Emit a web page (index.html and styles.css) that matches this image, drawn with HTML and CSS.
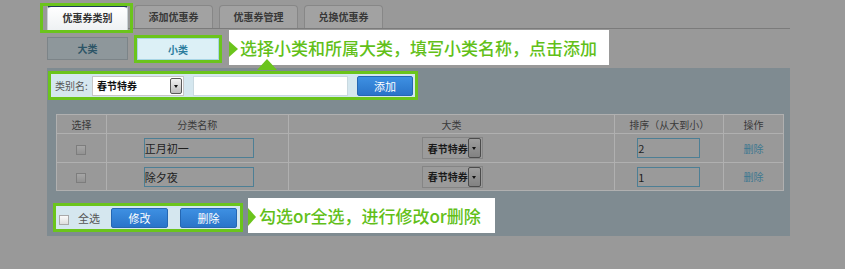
FILE: index.html
```html
<!DOCTYPE html>
<html lang="zh-CN">
<head>
    <meta charset="UTF-8">
    <title>优惠券类别</title>
    <link rel="stylesheet" href="styles.css">
</head>
<body>
<div class="page">

	<div class="tabs">
		<div class="tab active">优惠券类别<span class="ring"></span></div>
		<div class="tab">添加优惠券</div>
		<div class="tab">优惠券管理</div>
		<div class="tab">兑换优惠券</div>
	</div>

	<div class="subtabs">
		<div class="sub">大类</div>
		<div class="sub on">小类<span class="ring"></span></div>
	</div>

	<div class="panel">
		<div class="form_row">
			<span class="label">类别名:</span>
			<div class="pick pick_form"><span>春节特券</span><i class="drop"></i></div>
			<div class="field"></div>
			<div class="btn btn_add">添加</div>
		</div>

		<table class="grid">
			<tr>
				<th class="c1">选择</th>
				<th class="c2">分类名称</th>
				<th class="c3">大类</th>
				<th class="c4">排序（从大到小）</th>
				<th class="c5">操作</th>
			</tr>
			<tr class="r1">
				<td><span class="box"></span></td>
				<td><div class="cell_input name">正月初一</div></td>
				<td><div class="pick pick_cell"><span>春节特券</span><i class="drop"></i></div></td>
				<td><div class="cell_input sort">2</div></td>
				<td><a class="del">删除</a></td>
			</tr>
			<tr class="r2">
				<td><span class="box"></span></td>
				<td><div class="cell_input name">除夕夜</div></td>
				<td><div class="pick pick_cell"><span>春节特券</span><i class="drop"></i></div></td>
				<td><div class="cell_input sort">1</div></td>
				<td><a class="del">删除</a></td>
			</tr>
		</table>

		<div class="bottom_bar">
			<span class="box box_all"></span>
			<span class="all">全选</span>
			<div class="btn btn_edit">修改</div>
			<div class="btn btn_del">删除</div>
		</div>
	</div>

	<!-- callouts over the dimmed screenshot -->
	<div class="tip tip_one">选择小类和所属大类，填写小类名称，点击添加</div>
	<div class="tip tip_two">勾选or全选，进行修改or删除</div>

</div>
</body>
</html>
```

FILE: styles.css
```css
:root {
	--green: #6bc41c;
	--tip-text: #62bf19;
	--dim: #999999;
	--panel: #7f8b91;
	--light-blue: #d5e7ef;
}
* { box-sizing: border-box; }
html, body {
	margin: 0;
	background: var(--dim);
}
body {
	width: 845px;
	height: 269px;
	overflow: hidden;
	font-family: "Noto Sans CJK SC", "Liberation Sans", sans-serif;
	font-size: 10px;
	color: #333;
}
.page {
	position: relative;
	padding: 5px 0 0 47px;
	height: 269px;
}

/* tabs */
.tabs {
	display: flex;
	align-items: flex-start;
	width: 743px;
	height: 24px;
	border-bottom: 1px solid #7b7b7b;
}
.tab {
	position: relative;
	width: 79px;
	height: 23px;
	margin-right: 6px;
	border: 1px solid #878787;
	border-bottom: none;
	border-radius: 4px 4px 0 0;
	background: #a2a2a2;
	color: #383838;
	font-weight: bold;
	text-align: center;
	line-height: 22px;
}
.tab.active {
	width: 81px;
	height: 25px;
	border-color: #c9d0d4;
	border-top: 2px solid #1d3a5a;
	background: linear-gradient(#ffffff, #eef1f3);
	color: #333;
	line-height: 22px;
}
.ring {
	position: absolute;
	border: 3px solid var(--green);
	pointer-events: none;
}
.tab .ring { left: -8px; right: -6px; top: -4px; bottom: -3px; }

/* sub tabs */
.subtabs {
	display: flex;
	margin-top: 8px;
}
.sub {
	position: relative;
	width: 81px;
	height: 23px;
	margin-right: 9px;
	border: 1px solid #7c8488;
	background: #8e979b;
	color: #2c5466;
	font-weight: bold;
	text-align: center;
	line-height: 21px;
}
.sub.on {
	width: 82px;
	height: 22px;
	margin-top: 1px;
	border-color: #a8d5e5;
	background: #dcf0f6;
	color: #2a7c9c;
}
.sub .ring { left: -4px; right: -4px; top: -4px; bottom: -4px; }

/* panel */
.panel {
	width: 743px;
	height: 168px;
	margin-top: 8px;
	padding: 3px 0 0 1px;
	background: var(--panel);
}
.form_row {
	display: flex;
	align-items: center;
	width: 370px;
	height: 29px;
	border: 3px solid var(--green);
	background: var(--light-blue);
	padding-left: 4px;
}
.label {
	width: 37px;
	color: #555;
	font-size: 10px;
}
.pick {
	display: flex;
	align-items: center;
	justify-content: space-between;
	border: 1px solid #c6c6c6;
	background: #fff;
	color: #111;
	font-weight: bold;
	padding: 0 1px 0 4px;
}
.pick_form { width: 92px; height: 20px; }
.drop {
	position: relative;
	width: 12px;
	height: 16px;
	border: 1px solid #5a5a5a;
	border-radius: 2px;
	background: linear-gradient(#f2f2f2, #bdbdbd);
}
.drop::after {
	content: "";
	position: absolute;
	left: 3px;
	top: 6px;
	border-top: 3px solid #111;
	border-left: 2.5px solid transparent;
	border-right: 2.5px solid transparent;
}
.field {
	width: 155px;
	height: 20px;
	margin-left: 9px;
	border: 1px solid #c9d9e0;
	background: #fff;
}
.btn {
	width: 56px;
	height: 20px;
	border: 1px solid #2567b2;
	border-radius: 2px;
	background: linear-gradient(#3e90e2, #2a74c9);
	color: #fff;
	text-align: center;
	line-height: 18px;
	font-size: 11px;
}
.btn_add { margin-left: 9px; }

/* table */
.grid {
	margin: 14px 0 0 8px;
	width: 728px;
	border-collapse: collapse;
	background: #999;
	color: #3a3a3a;
}
.grid th, .grid td {
	border: 1px solid #b0b0b0;
	padding: 0;
	text-align: center;
	font-weight: normal;
}
.grid th { height: 19px; }
.r1 td { height: 29px; }
.r2 td { height: 28px; }
.c1 { width: 50px; }
.c2 { width: 182px; }
.c3 { width: 327px; }
.c4 { width: 109px; }
.c5 { width: 60px; }
.box {
	display: inline-block;
	width: 10px;
	height: 10px;
	border: 1px solid #7d7d7d;
	background: linear-gradient(#a6a6a6, #929292);
	vertical-align: middle;
}
.cell_input {
	height: 20px;
	border: 1px solid #4d7f95;
	background: #9a9a9a;
	color: #1e1e1e;
	text-align: left;
	line-height: 18px;
	font-size: 11px;
}
.name { width: 110px; margin-left: 37px; }
.sort { width: 63px; margin-left: 22px; }
.pick_cell {
	width: 61px;
	height: 22px;
	margin-left: 133px;
	border-color: #858585;
	background: #9b9b9b;
	padding-left: 5px;
	color: #1a1a1a;
}
.pick_cell .drop {
	width: 13px;
	height: 20px;
	border-color: #4c4c4c;
	background: linear-gradient(#9e9e9e, #828282);
}
.pick_cell .drop::after { top: 8px; left: 3.5px; }
.del { color: #3d7890; }

/* bottom bar */
.bottom_bar {
	display: flex;
	align-items: center;
	width: 190px;
	height: 29px;
	margin: 12px 0 0 5px;
	border: 3px solid var(--green);
	background: var(--light-blue);
	padding-left: 3px;
}
.box_all {
	margin-top: 4px;
	border-color: #a9a9a9;
	background: linear-gradient(#fafafa, #dedede);
}
.all {
	margin-left: 9px;
	color: #555;
	font-size: 11px;
}
.btn_edit { width: 57px; margin-left: 11px; }
.btn_del { width: 57px; margin-left: 12px; }

/* callouts */
.tip {
	position: absolute;
	height: 35px;
	background: #fff;
	color: var(--tip-text);
	font-size: 17px;
	font-weight: 500;
	line-height: 35px;
	padding-left: 11px;
	white-space: nowrap;
}
.tip::before {
	content: "";
	position: absolute;
	left: 0;
	border-left: 9px solid var(--green);
	border-top: 8px solid transparent;
	border-bottom: 8px solid transparent;
}
.tip_one { left: 229px; top: 30px; width: 380px; }
.tip_one::before { top: 11px; }
.tip_one::after {
	content: "";
	position: absolute;
	left: 28px;
	top: 29px;
	border-bottom: 11px solid var(--green);
	border-left: 10px solid transparent;
	border-right: 10px solid transparent;
}
.tip_two { left: 248px; top: 198px; width: 247px; }
.tip_two::before { top: 10px; border-left-width: 8px; border-top-width: 9px; border-bottom-width: 9px; }
```
